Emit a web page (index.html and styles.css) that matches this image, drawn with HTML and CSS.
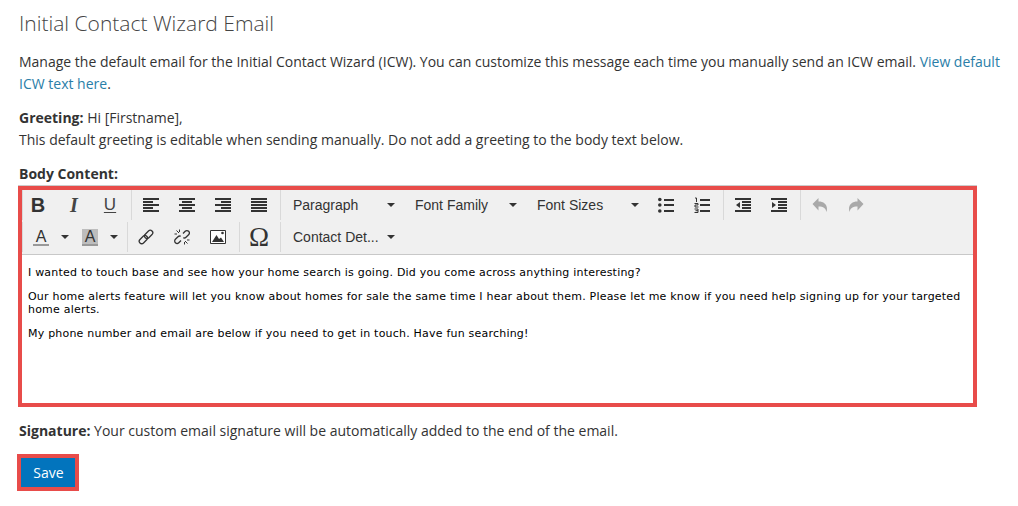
FILE: index.html
```html
<!DOCTYPE html>
<html lang="en">
<head>
<meta charset="utf-8">
<title>Initial Contact Wizard Email</title>
<link rel="stylesheet" href="styles.css">
</head>
<body>
<main class="page">
  <h1 class="title">Initial Contact Wizard Email</h1>
  <p class="para">Manage the default email for the Initial Contact Wizard (ICW). You can customize this message each time you manually send an ICW email. <a class="link" href="#">View default ICW text here</a>.</p>
  <p class="para"><strong>Greeting:</strong> Hi [Firstname],<br>This default greeting is editable when sending manually. Do not add a greeting to the body text below.</p>
  <p class="para label"><strong>Body Content:</strong></p>
  <div class="editor">
    <div class="toolbar">
      <div class="row">
        <div class="group first">
          <span class="btn glyph bold">B</span>
          <span class="btn glyph italic">I</span>
          <span class="btn glyph under">U</span>
        </div>
        <div class="group">
          <span class="btn"><svg class="ico" viewBox="0 0 16 16"><path d="M0 2h16M0 5h10M0 8h16M0 11h10M0 14h16"/></svg></span>
          <span class="btn"><svg class="ico" viewBox="0 0 16 16"><path d="M0 2h16M3 5h10M0 8h16M3 11h10M0 14h16"/></svg></span>
          <span class="btn"><svg class="ico" viewBox="0 0 16 16"><path d="M0 2h16M6 5h10M0 8h16M6 11h10M0 14h16"/></svg></span>
          <span class="btn"><svg class="ico" viewBox="0 0 16 16"><path d="M0 2h16M0 5h16M0 8h16M0 11h16M0 14h16"/></svg></span>
        </div>
        <div class="group">
          <span class="list">Paragraph<i class="caret"></i></span>
          <span class="list">Font Family<i class="caret"></i></span>
          <span class="list">Font Sizes<i class="caret"></i></span>
          <span class="btn"><svg class="ico" viewBox="0 0 16 16"><circle class="dot" cx="1.8" cy="2.5" r="1.8"/><circle class="dot" cx="1.8" cy="8" r="1.8"/><circle class="dot" cx="1.8" cy="14" r="1.8"/><path d="M6 3h10M6 8h10M6 14h10"/></svg></span>
          <span class="btn"><svg class="ico" viewBox="0 0 16 16"><path class="thin" d="M1 1h1.500v4M.5 6.500h3.500v1.500h-3v2h3.500M.5 12h3.500v3.500h-3.500M1.500 13.700h2.500"/><path d="M6 3h10M6 8h10M6 14h10"/></svg></span>
        </div>
        <div class="group">
          <span class="btn"><svg class="ico" viewBox="0 0 16 16"><path d="M0 2h16M7 5h9M7 8h9M7 11h9M0 14h16"/><path class="dot" d="M5 5v6L1 8z"/></svg></span>
          <span class="btn"><svg class="ico" viewBox="0 0 16 16"><path d="M0 2h16M7 5h9M7 8h9M7 11h9M0 14h16"/><path class="dot" d="M1 5v6l4-3z"/></svg></span>
        </div>
        <div class="group">
          <span class="btn"><svg class="ico off" viewBox="0 0 16 16"><path class="dot" d="M6.500 1v3.500c5 0 8.500 2.500 8.500 7.500 0 1.200-.3 2.200-.8 3 .2-3.500-3-5.500-7.700-5.500V13.500L.5 7z"/></svg></span>
          <span class="btn"><svg class="ico off" viewBox="0 0 16 16"><path class="dot" d="M9.500 1v3.500c-5 0-8.500 2.500-8.500 7.500 0 1.200.3 2.200.8 3-.2-3.500 3-5.500 7.700-5.500V13.500L15.500 7z"/></svg></span>
        </div>
      </div>
      <div class="row">
        <div class="group first flush">
          <span class="split"><span class="letter">A<i class="swatch"></i></span><i class="caret"></i></span>
          <span class="split"><span class="letter boxed">A<i class="swatch"></i></span><i class="caret"></i></span>
        </div>
        <div class="group tight">
          <span class="btn"><svg class="ico" viewBox="0 0 16 16"><g class="chain"><rect x="-.5" y="5.500" width="9.500" height="5" rx="2.500" transform="rotate(-45 8 8)"/><rect x="7" y="5.500" width="9.500" height="5" rx="2.500" transform="rotate(-45 8 8)"/></g></svg></span>
          <span class="btn"><svg class="ico" viewBox="0 0 16 16"><g class="chain"><path d="M7 11.500 4.800 13.700a2.400 2.400 0 0 1-3.400-3.400L4 7.700a2.400 2.400 0 0 1 2.800-.4M9 4.500l2.200-2.200a2.400 2.400 0 0 1 3.400 3.400L12 8.300a2.400 2.400 0 0 1-2.800.4"/></g><path class="thin" d="M2.500 1.500 5 4M5.500.5v2.500M.5 5h2.500M13.500 14.500 11 12M10.500 15.500V13M15.500 11H13"/></svg></span>
          <span class="btn"><svg class="ico" viewBox="0 0 16 16"><path class="frame" d="M.5 1.500h15v13H.5z"/><path class="dot" d="M2 13 6.500 6 9 10l2-1.500L14 13z"/><circle class="dot" cx="12.500" cy="4" r="1.300"/></svg></span>
        </div>
        <div class="group">
          <span class="btn glyph omega">Ω</span>
        </div>
        <div class="group">
          <span class="list">Contact Det...<i class="caret"></i></span>
        </div>
      </div>
    </div>
    <div class="content">
      <p class="msg">I wanted to touch base and see how your home search is going. Did you come across anything interesting?</p>
      <p class="msg">Our home alerts feature will let you know about homes for sale the same time I hear about them. Please let me know if you need help signing up for your targeted home alerts.</p>
      <p class="msg">My phone number and email are below if you need to get in touch. Have fun searching!</p>
    </div>
  </div>
  <p class="para sig"><strong>Signature:</strong> Your custom email signature will be automatically added to the end of the email.</p>
  <button class="save" type="button">Save</button>
</main>
</body>
</html>
```
FILE: styles.css
```css
* { box-sizing: border-box; }
html, body { margin: 0; padding: 0; background: #fff; }
body { font-family: "Open Sans", sans-serif; font-size: 14px; color: #333; }
.page { padding: 9px 14px 0 19px; }
.title { margin: 0 0 14px; font-size: 21px; line-height: 28px; font-weight: 300; color: #444; }
.para { margin: 0 0 12px; line-height: 22px; }
.para strong { font-weight: 700; }
.label { margin-bottom: 1px; }
.sig { margin: 13px 0 12px; }
.link { color: #2a7ea8; text-decoration: none; }

.editor { width: 959px; margin-left: -1px; height: 221px; border: 4px solid #e84c4a; display: flex; flex-direction: column; box-shadow: 0 -1px 0 #ccc; background: #fff; }
.toolbar { background: #f0f0f0; border-bottom: 1px solid #c8c8c8; height: 65px; flex: none; }
.row { display: flex; height: 32px; align-items: flex-start; }
.group { display: flex; gap: 6px; height: 30px; align-items: center; padding: 0 6px 0 4px; border-left: 1px solid #d9d9d9; }
.group.first { padding-left: 0; }
.group.flush { gap: 0; }
.group.tight { padding-left: 3px; }
.btn { width: 30px; height: 30px; display: flex; align-items: center; justify-content: center; }
.glyph { color: #333; }
.bold { font: 700 20px "Liberation Sans", sans-serif; }
.italic { font: italic 700 20px "Liberation Serif", serif; color: #444; }
.under { font: 400 17px "Liberation Sans", sans-serif; text-decoration: underline; text-underline-offset: 2px; color: #444; }
.omega { font: 400 27px "Liberation Serif", serif; }

.ico { width: 16px; height: 16px; display: block; fill: none; stroke: #333; stroke-width: 2; }
.ico .dot { fill: #333; stroke: none; }
.ico .thin { stroke-width: 1; fill: none; }
.ico .frame { stroke-width: 1; stroke: #333; fill: #fff; }
.ico .chain { stroke-width: 1.300; fill: none; }
.ico.off .dot { fill: #a9a9a9; }

.list { width: 116px; height: 30px; padding-left: 8px; display: flex; align-items: center; font: 400 14px "Liberation Sans", sans-serif; color: #333; position: relative; white-space: nowrap; }
.list .caret { position: absolute; right: 6px; top: 13px; }
.caret { display: block; width: 0; height: 0; border-left: 4px solid transparent; border-right: 4px solid transparent; border-top: 4px solid #333; }

.split { width: 49px; height: 30px; padding-left: 10px; display: flex; align-items: center; }
.split .caret { margin-left: 12px; }
.letter { width: 16px; height: 17px; position: relative; display: block; text-align: center; font: 400 16px/15px "Liberation Sans", sans-serif; color: #333; }
.boxed { background: #bdbdbd; }
.swatch { position: absolute; left: 0; right: 0; bottom: 0; height: 2px; background: #999; }

.content { flex: 1; padding: 11px 6px; font: 400 11px/13px "DejaVu Sans", sans-serif; letter-spacing: .21px; color: #000; }
.msg { margin: 0 0 11px; }
.msg:last-child { margin-bottom: 0; }

.save { display: block; margin-left: -2px; width: 62px; height: 37px; padding: 0 0 0 1px; border: 4px solid #e84c4a; background: #0274bd; color: #fff; font: 400 14px "Open Sans", sans-serif; }
```
